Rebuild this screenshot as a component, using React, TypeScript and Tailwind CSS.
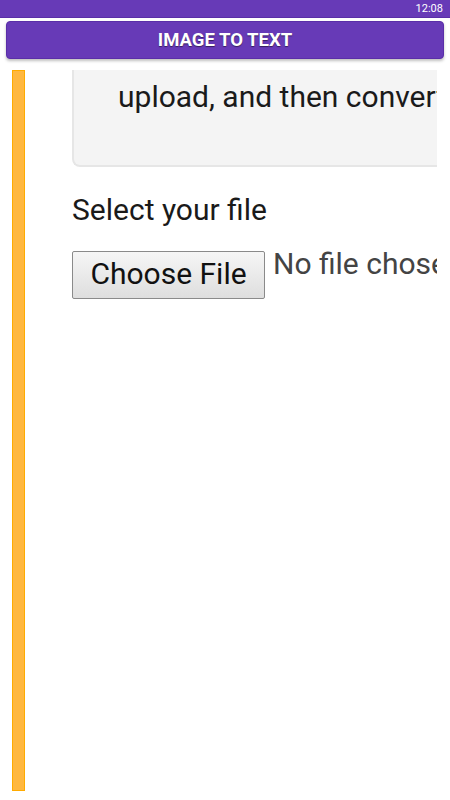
export default function App() {
  return (
    <div className="flex h-[800px] w-[450px] flex-col overflow-hidden bg-white font-['Roboto',sans-serif]">
      {/* status bar */}
      <div className="flex h-[18px] shrink-0 items-center justify-end border-b border-[#5a2ea8] bg-[#673ab7] pr-[7px]">
        <span className="text-[11px] leading-none text-white">12:08</span>
      </div>

      {/* title bar */}
      <div className="mx-[6px] mt-[3px] flex h-[38px] shrink-0 items-center justify-center rounded-[4px] border border-[#5a2ea8] bg-[#673ab7] shadow-[0_2px_3px_rgba(0,0,0,0.25)]">
        <span className="text-[18.5px] font-bold leading-none text-white [text-shadow:0_1px_1px_rgba(0,0,0,0.5)]">
          IMAGE TO TEXT
        </span>
      </div>

      {/* body */}
      <div className="mt-[11px] flex h-[721px] shrink-0">
        <div className="ml-[12px] w-[13px] shrink-0 border border-[#ffab00] bg-[#ffb840]" />
        <div className="w-[412px] shrink-0 overflow-hidden pl-[47px]">
          <div className="w-[520px]">
            <div className="h-[97px] rounded-bl-[8px] border-b-2 border-l-2 border-[#e6e6e6] bg-[#f4f4f4] pl-[44px] pt-[10px]">
              <p className="whitespace-nowrap text-[30px] leading-[34px] text-[#1a1a1a]">
                upload, and then convert
              </p>
            </div>
            <p className="mt-[26px] text-[30px] leading-[34px] text-[#1a1a1a]">Select your file</p>
            <div className="mt-[24px] flex items-start">
              <button className="h-[48px] w-[193px] rounded-[2px] border border-[#8a8a8a] bg-gradient-to-b from-[#f6f6f6] to-[#dedede] pb-[3px] text-[30px] leading-none text-[#111]">
                Choose File
              </button>
              <span className="-mt-[2px] ml-[8px] whitespace-nowrap text-[30px] leading-none text-[#444]">
                No file chosen
              </span>
            </div>
          </div>
        </div>
      </div>
    </div>
  );
}
